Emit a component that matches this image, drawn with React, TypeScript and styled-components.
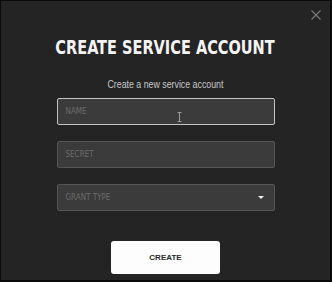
import React from "react";
import styled, { createGlobalStyle } from "styled-components";

const Global = createGlobalStyle`
  html, body { margin: 0; padding: 0; background: #000; }
  * { box-sizing: border-box; }
`;

const Frame = styled.div`
  width: 332px;
  height: 282px;
  border-style: solid;
  border-color: #0a0a0a;
  border-width: 1px 2px 2px 1px;
  background: #242424;
  position: relative;
  display: flex;
  flex-direction: column;
  align-items: center;
  font-family: "Liberation Sans", sans-serif;
`;

const Close = styled.button`
  position: absolute;
  top: 8px;
  right: 8px;
  width: 12px;
  height: 12px;
  padding: 0;
  border: 0;
  background: transparent;
  display: flex;
`;

const Title = styled.h1`
  margin: 37px 0 0;
  font-family: "DejaVu Sans Condensed", sans-serif;
  font-size: 19px;
  line-height: 19px;
  font-weight: 700;
  color: #f4f4f4;
  white-space: nowrap;
  transform: scaleX(0.85);
`;

const Subtitle = styled.p`
  margin: 21px 0 0;
  font-family: "Liberation Sans", sans-serif;
  font-size: 11px;
  line-height: 12px;
  color: #c8c8c8;
  white-space: nowrap;
  transform: scaleX(0.8);
`;

const Form = styled.div`
  margin-top: 8px;
  display: flex;
  flex-direction: column;
  gap: 16px;
  width: 218px;
`;

const Field = styled.div<{ $focused?: boolean }>`
  position: relative;
  height: 27px;
  border-radius: 2px;
  border: 1px solid ${(p) => (p.$focused ? "#c4c4c4" : "#555")};
  background: #3b3b3b;
  display: flex;
  align-items: center;
  padding: 0 8px;
  font-family: "DejaVu Sans Condensed", sans-serif;
  font-size: 8px;
  color: #6c6c6c;
`;

const Caret = styled.span`
  margin-left: auto;
  margin-right: 2px;
  width: 0;
  height: 0;
  border-left: 3px solid transparent;
  border-right: 3px solid transparent;
  border-top: 3px solid #f0f0f0;
`;

const Cursor = styled.svg`
  position: absolute;
  left: 119px;
  top: 13px;
`;

const CreateButton = styled.button`
  margin-top: 30px;
  width: 109px;
  height: 33px;
  border: 0;
  border-radius: 3px;
  background: #fdfdfd;
  font-family: "Liberation Sans", sans-serif;
  font-weight: 700;
  font-size: 8px;
  color: #2a2a2a;
`;

export default function App() {
  return (
    <>
      <Global />
      <Frame>
        <Close aria-label="close">
          <svg width="12" height="12" viewBox="0 0 12 12">
            <path d="M1.5 1.5 L10.5 10.5 M10.5 1.5 L1.5 10.5" stroke="#7a7a7a" strokeWidth="1.2" />
          </svg>
        </Close>
        <Title>CREATE SERVICE ACCOUNT</Title>
        <Subtitle>Create a new service account</Subtitle>
        <Form>
          <Field $focused>
            NAME
            <Cursor width="5" height="10" viewBox="0 0 5 10">
              <path d="M0.5 0.5 H4.5 M2.5 0.5 V9.5 M0.5 9.5 H4.5" stroke="#9a9a9a" strokeWidth="1" fill="none" />
            </Cursor>
          </Field>
          <Field>SECRET</Field>
          <Field>
            GRANT TYPE
            <Caret />
          </Field>
        </Form>
        <CreateButton>CREATE</CreateButton>
      </Frame>
    </>
  );
}
